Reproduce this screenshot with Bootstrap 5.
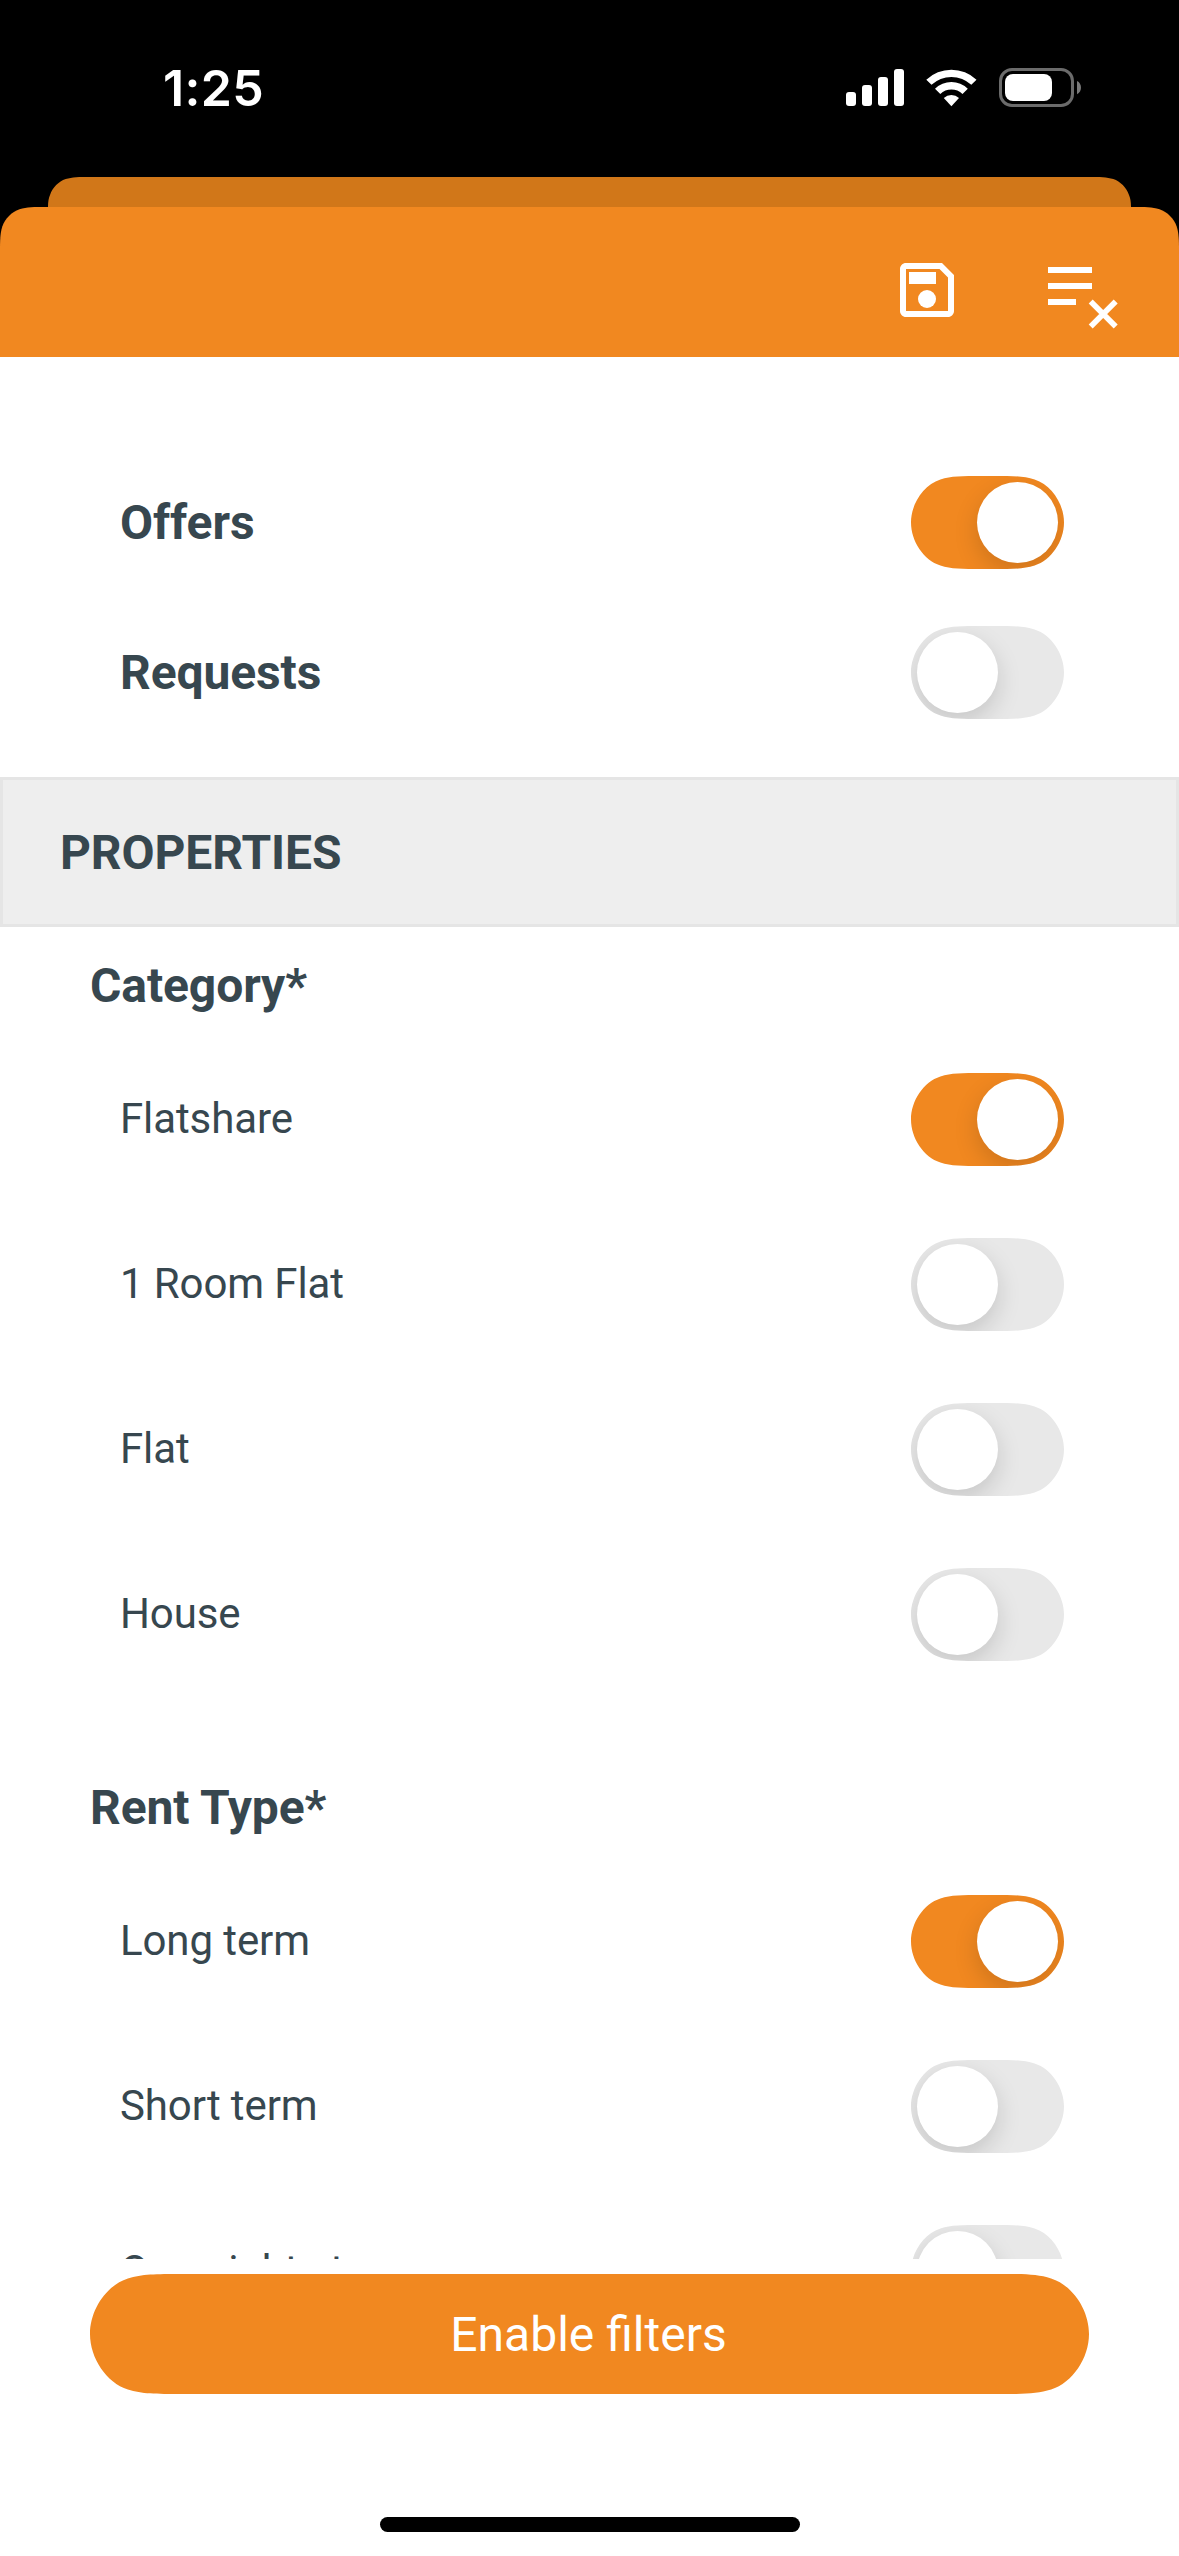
<!DOCTYPE html>
<html lang="en">
<head>
<meta charset="utf-8">
<meta name="viewport" content="width=device-width, initial-scale=1">
<title>Filters</title>
<link href="https://cdn.jsdelivr.net/npm/bootstrap@5.3.0/dist/css/bootstrap.min.css" rel="stylesheet">
<style>
:root { --brand: #f18820; --ink: #37474f; }
body { height: 2556px; overflow: hidden; background: #000; color: var(--ink); font-family: Roboto, sans-serif; font-size: 42px; line-height: 60px; letter-spacing: -.1px; }
.status-bar { height: 177px; padding: 68px 98px 0 163px; color: #fff; }
.clock { font: 600 50px/41px Inter, sans-serif; letter-spacing: .3px; }
.back-sheet { height: 30px; margin: 0 48px; background: #d17719;
  clip-path: path("M0 30C0 24.600 .7 21 2.100 17.700C4.700 10.500 10.500 4.700 17.700 2.100C24.300 0 30.500 0 43 0H1040C1052.500 0 1058.700 0 1065.300 2.100C1072.500 4.700 1078.300 10.500 1080.900 17.700C1082.300 21 1083 24.600 1083 30Z"); }
.sheet-head { height: 150px; padding: 47px 56px 0 0; gap: 76px; background: var(--brand);
  clip-path: path("M0 150V47C0 33.600 0 27 2.300 19.500C5.200 11.500 11.500 5.200 19.500 2.300C27 0 33.600 0 47 0H1132C1145.400 0 1152 0 1159.500 2.300C1167.500 5.200 1173.800 11.500 1176.700 19.500C1179 27 1179 33.600 1179 47V150Z"); }
.sheet-body { height: 1902px; background: #fff; overflow: hidden; }
.toggle-group { padding: 0 115px 0 120px; }
.kind-group { gap: 57px; margin: 119px 0 58px; font-size: 48px; font-weight: 700; }
.option-group { gap: 72px; margin-top: 57px; }
.toggle-line { height: 93px; }
.option-group span { padding-bottom: 2px; }
.toggle-line .form-check-input { width: 153px; height: 93px; margin: 0; padding: 6px; border: 0; border-radius: 0; background: #e8e8e8; display: flex; flex: none;
  clip-path: path("M71 0C50.6 0 40.4 0 29.4 3.5C12.6 8.8 0 27.9 0 46.5C0 65.1 12.6 84.2 29.4 89.5C40.4 93 50.6 93 71 93H82C102.4 93 112.6 93 123.6 89.5C140.4 84.2 153 65.1 153 46.5C153 27.9 140.4 8.8 123.6 3.5C112.6 0 102.4 0 82 0Z"); }
.toggle-line .form-check-input::before { content: ""; width: 81px; height: 81px; border-radius: 50%; background: #fff; box-shadow: 0 9px 24px rgba(0,0,0,.15); }
.toggle-line .form-check-input:checked { background: var(--brand); justify-content: flex-end; }
.band { height: 150px; padding: 2px 57px 0; border: 3px solid #e5e5e5; background: #eee; font-size: 48px; }
.group-title { margin: 29px 0 0; padding-left: 90px; font-size: 48px; font-weight: 700; line-height: 60px; }
.option-group + .group-title { margin-top: 117px; }
.sheet-foot { height: 297px; padding: 15px 90px 24px; background: #fff; }
.btn-enable { width: 999px; height: 120px; padding: 1px 2px 0 0; border: 0; border-radius: 0; background: var(--brand); color: #fff; font-size: 48px; line-height: 120px;
  clip-path: path("M91.7 0C65.3 0 52.1 0 37.9 4.5C16.3 11.3 0 36 0 60C0 84 16.3 108.7 37.9 115.5C52.1 120 65.3 120 91.7 120H907.3C933.7 120 946.9 120 961.1 115.5C982.7 108.7 999 84 999 60C999 36 982.7 11.3 961.1 4.5C946.9 0 933.7 0 907.3 0Z"); }
.home-bar { width: 420px; height: 15px; background: #000; }
</style>
</head>
<body class="d-flex flex-column">
<header class="status-bar d-flex justify-content-between align-items-start flex-shrink-0">
  <div class="clock">1:25</div>
  <svg width="236" height="40" viewBox="845 68 236 40" fill="#fff" aria-label="Signal, Wi-Fi, battery">
    <rect x="846" y="92" width="10" height="14" rx="3"/><rect x="862" y="85" width="10" height="21" rx="3"/><rect x="878" y="77" width="10" height="29" rx="3"/><rect x="894" y="69" width="10" height="37" rx="3"/>
    <path d="M926.3 79.8a36.4 36.4 0 0 1 50.2 0l-5.2 5a29 29 0 0 0-39.8 0z"/>
    <path d="M935 88.700a23.700 23.700 0 0 1 32.800 0l-5.300 5.200a16.300 16.300 0 0 0-22.200 0z"/>
    <path d="M943.800 97.900a11.500 11.500 0 0 1 15.200 0l-7.600 8.300z"/>
    <rect x="1000.500" y="69.500" width="72" height="36" rx="11.500" fill="none" stroke="#6b6b6b" stroke-width="3"/>
    <rect x="1005" y="74" width="47" height="27" rx="8"/>
    <path d="M1077 81c5.300 2.200 5.300 11 0 13.200z" fill="#7a7a7a"/>
  </svg>
</header>
<div class="back-sheet flex-shrink-0"></div>
<nav class="sheet-head d-flex justify-content-end align-items-start flex-shrink-0">
  <svg width="72" height="72" viewBox="0 0 24 24" fill="#fff" role="img" aria-label="Save"><path fill-rule="evenodd" d="M17 3H5c-1.110 0-2 .9-2 2v14c0 1.100.89 2 2 2h14c1.100 0 2-.9 2-2V7zM19 19H5V5h11.170L19 7.830z"/><circle cx="12" cy="15" r="3"/><path d="M6 6h9v4H6z"/></svg>
  <svg width="84" height="84" viewBox="1039 254 84 84" fill="#fff" role="img" aria-label="Clear filters"><path d="M1048 267h44v6h-44zM1048 283h44v6h-44zM1048 299h28v6h-28z"/><path d="M1090.700 301.500l25 25M1115.700 301.500l-25 25" stroke="#fff" stroke-width="5.600"/></svg>
</nav>
<main class="sheet-body flex-shrink-0">
  <section class="toggle-group kind-group d-flex flex-column">
    <label class="toggle-line d-flex justify-content-between align-items-center"><span>Offers</span><input class="form-check-input" type="checkbox" role="switch" checked></label>
    <label class="toggle-line d-flex justify-content-between align-items-center"><span>Requests</span><input class="form-check-input" type="checkbox" role="switch"></label>
  </section>
  <div class="band d-flex align-items-center fw-bold">PROPERTIES</div>
  <h2 class="group-title">Category*</h2>
  <section class="toggle-group option-group d-flex flex-column">
    <label class="toggle-line d-flex justify-content-between align-items-center"><span>Flatshare</span><input class="form-check-input" type="checkbox" role="switch" checked></label>
    <label class="toggle-line d-flex justify-content-between align-items-center"><span>1 Room Flat</span><input class="form-check-input" type="checkbox" role="switch"></label>
    <label class="toggle-line d-flex justify-content-between align-items-center"><span>Flat</span><input class="form-check-input" type="checkbox" role="switch"></label>
    <label class="toggle-line d-flex justify-content-between align-items-center"><span>House</span><input class="form-check-input" type="checkbox" role="switch"></label>
  </section>
  <h2 class="group-title">Rent Type*</h2>
  <section class="toggle-group option-group d-flex flex-column">
    <label class="toggle-line d-flex justify-content-between align-items-center"><span>Long term</span><input class="form-check-input" type="checkbox" role="switch" checked></label>
    <label class="toggle-line d-flex justify-content-between align-items-center"><span>Short term</span><input class="form-check-input" type="checkbox" role="switch"></label>
    <label class="toggle-line d-flex justify-content-between align-items-center"><span>Overnight stay</span><input class="form-check-input" type="checkbox" role="switch"></label>
  </section>
</main>
<footer class="sheet-foot d-flex flex-column justify-content-between align-items-center flex-shrink-0">
  <button class="btn btn-enable" type="button">Enable filters</button>
  <div class="home-bar rounded-pill"></div>
</footer>
<script src="https://cdn.jsdelivr.net/npm/bootstrap@5.3.0/dist/js/bootstrap.bundle.min.js"></script>
</body>
</html>
